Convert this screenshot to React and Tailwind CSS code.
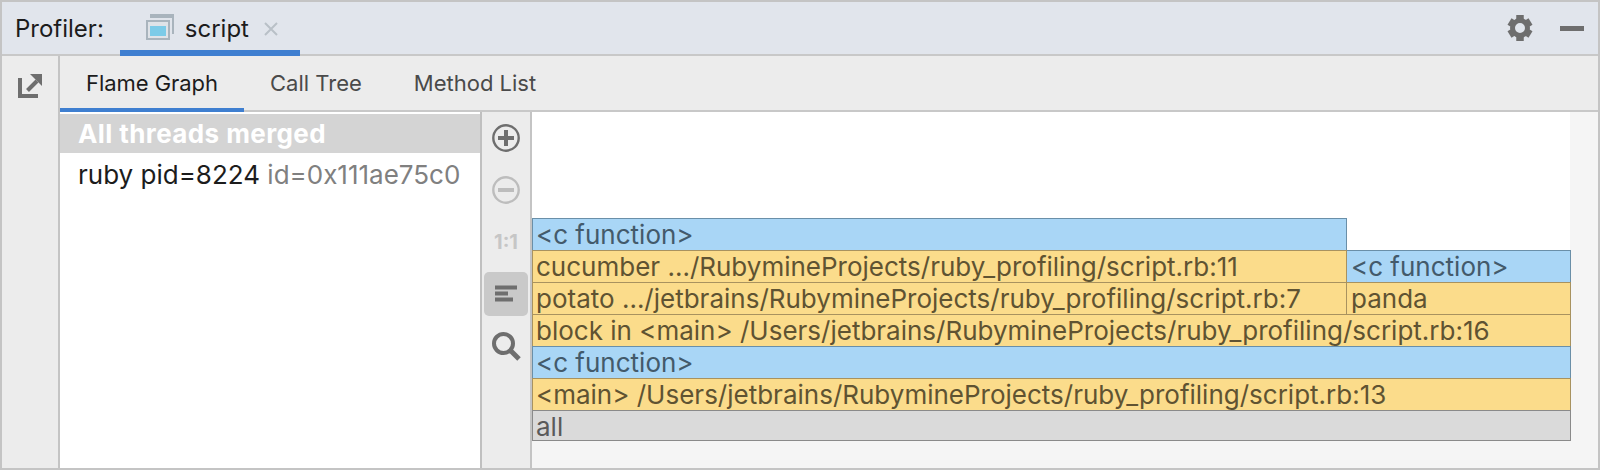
const FONT = "font-['Inter',sans-serif]";

// flame graph rows, top to bottom
const ROWS = [
  [
    { w: 815, kind: 'blue', label: '<c function>' },
  ],
  [
    { w: 815, kind: 'yellow', label: 'cucumber .../RubymineProjects/ruby_profiling/script.rb:11' },
    { w: 224, kind: 'blue', label: '<c function>' },
  ],
  [
    { w: 815, kind: 'yellow', label: 'potato .../jetbrains/RubymineProjects/ruby_profiling/script.rb:7' },
    { w: 224, kind: 'yellow', label: 'panda' },
  ],
  [{ w: 1039, kind: 'yellow', label: 'block in <main> /Users/jetbrains/RubymineProjects/ruby_profiling/script.rb:16' }],
  [{ w: 1039, kind: 'blue', label: '<c function>' }],
  [{ w: 1039, kind: 'yellow', label: '<main> /Users/jetbrains/RubymineProjects/ruby_profiling/script.rb:13' }],
  [{ w: 1039, kind: 'gray', label: 'all' }],
];

const CELL = {
  blue: 'bg-[#a9d6f6] border-[#6a8fa8] text-[#435a6b]',
  yellow: 'bg-[#fbdc8b] border-[#a8925f] text-[#5f5332]',
  gray: 'bg-[#dadada] border-[#8a8a8a] text-[#5a5a5a]',
};

function GraphRow({ cells, last }) {
  return (
    <div className={`flex ${last ? 'h-[31px]' : 'h-[32px]'}`}>
      {cells.map((c, i) => (
        <div
          key={i}
          style={{ width: c.w }}
          className={`${last ? 'h-[31px]' : 'h-[33px]'} shrink-0 border-[1px] pl-[3px] text-[26px] leading-[32px] whitespace-nowrap overflow-hidden ${CELL[c.kind]} ${i > 0 ? 'border-l-0 pl-[4px]' : ''}`}
        >
          {c.label}
        </div>
      ))}
    </div>
  );
}

function TabIcon() {
  return (
    <svg width="40" height="40" viewBox="0 0 40 40">
      <path d="M10 6H34V26H32V10H10Z" fill="#a9b4bd" />
      <rect x="6" y="12" width="24" height="20" fill="#a9b4bd" />
      <rect x="8" y="14" width="20" height="16" fill="#dfe3e8" />
      <rect x="10" y="18" width="16" height="10" fill="#7ccbe8" />
    </svg>
  );
}

function ExportIcon() {
  return (
    <svg width="40" height="40" viewBox="0 0 40 40">
      <path d="M8 12H12V28H28V32H8Z" fill="#6e6e6e" />
      <path d="M17.5 24.5L27 15" fill="none" stroke="#6e6e6e" strokeWidth="4" />
      <path d="M20 8H32V20Z" fill="#6e6e6e" />
    </svg>
  );
}

function GearIcon() {
  return (
    <svg width="26" height="28" viewBox="0 0 26 28">
      <circle cx="13" cy="14" r="7.5" fill="none" stroke="#6e6e6e" strokeWidth="5" />
      <g stroke="#6e6e6e" strokeWidth="7.5">
        <line x1="13" y1="1" x2="13" y2="6" />
        <line x1="13" y1="22" x2="13" y2="27" />
        <line x1="2.5" y1="7.5" x2="6.5" y2="10" />
        <line x1="19.5" y1="18" x2="23.5" y2="20.5" />
        <line x1="2.5" y1="20.5" x2="6.5" y2="18" />
        <line x1="19.5" y1="10" x2="23.5" y2="7.5" />
      </g>
    </svg>
  );
}

function CircleIcon({ color, plus }) {
  return (
    <svg width="30" height="30" viewBox="0 0 30 30">
      <circle cx="15" cy="15" r="12.7" fill="none" stroke={color} strokeWidth="2.4" />
      <path d="M7 15H23" stroke={color} strokeWidth="4" />
      {plus && <path d="M15 7V23" stroke={color} strokeWidth="4" />}
    </svg>
  );
}

function ToolBtn({ active, children }) {
  return (
    <div className={`w-[44px] h-[44px] flex items-center justify-center rounded-[5px] ${active ? 'bg-[#c9c9c9]' : ''}`}>
      {children}
    </div>
  );
}

export default function App() {
  return (
    <div className={`w-[1600px] h-[470px] flex flex-col bg-[#ececec] border-2 border-[#c4c4c4] ${FONT}`}>
      {/* Tool window header */}
      <div className="h-[54px] shrink-0 flex items-center bg-[#e1e5ec] border-b-2 border-[#c8c8c8]">
        <span className="ml-[13px] mt-[2px] text-[24px] text-[#1c1c1c]">Profiler:</span>
        <div className="relative ml-[16px] w-[180px] h-[52px] flex items-center">
          <div className="ml-[20px] flex items-center">
            <TabIcon />
            <span className="ml-[5px] mt-[2px] text-[24px] text-[#1c1c1c]">script</span>
            <svg className="ml-[15px] mt-[2px]" width="14" height="14" viewBox="0 0 14 14">
              <path d="M1 1L13 13M13 1L1 13" stroke="#b9c0c7" strokeWidth="2" />
            </svg>
          </div>
          <div className="absolute left-0 right-0 bottom-[-2px] h-[6px] bg-[#3f7fd0]" />
        </div>
        <div className="ml-auto mr-[14px] flex items-center gap-[27px]">
          <GearIcon />
          <div className="w-[24px] h-[5px] bg-[#6e6e6e]" />
        </div>
      </div>

      <div className="flex-1 flex min-h-0">
        {/* Left strip */}
        <div className="w-[58px] shrink-0 border-r-2 border-[#c4c4c4] pt-[10px] pl-[8px]">
          <ExportIcon />
        </div>

        <div className="flex-1 flex flex-col min-w-0">
          {/* Tabs */}
          <div className="h-[56px] shrink-0 flex bg-[#ececec] border-b-2 border-[#c8c8c8] text-[22px] leading-[54px]">
            <div className="relative w-[184px] pl-[26px] tracking-[-0.05px] text-[#1c1c1c]">
              Flame Graph
              <div className="absolute left-0 right-0 bottom-[-2px] h-[4px] bg-[#3f7fd0]" />
            </div>
            <div className="ml-[26px] text-[#4a4a4a]">Call Tree</div>
            <div className="ml-[52px] text-[#4a4a4a]">Method List</div>
          </div>

          <div className="flex-1 flex min-h-0">
            {/* Thread list */}
            <div className="w-[422px] shrink-0 bg-white pt-[2px] border-r-2 border-[#c0c0c0]">
              <div className="h-[39px] pl-[18px] bg-[#d4d4d4] text-white font-bold text-[26px] tracking-[0.4px] leading-[40px] whitespace-nowrap">
                All threads merged
              </div>
              <div className="pl-[18px] text-[26px] leading-[44px] whitespace-nowrap text-[#1c1c1c]">
                ruby pid=8224 <span className="text-[#808080]">id=0x111ae75c0</span>
              </div>
            </div>

            {/* Toolbar */}
            <div className="w-[50px] shrink-0 flex flex-col items-center gap-[8px] pt-[4px] border-r-2 border-[#c4c4c4]">
              <ToolBtn><CircleIcon color="#6e6e6e" plus /></ToolBtn>
              <ToolBtn><CircleIcon color="#bdbdbd" /></ToolBtn>
              <ToolBtn><span className="text-[20px] font-bold text-[#c6c6c6]">1:1</span></ToolBtn>
              <ToolBtn active>
                <svg width="24" height="18" viewBox="0 0 24 18">
                  <path d="M1 2.5H23M1 8.5H14M1 14.5H19" stroke="#6e6e6e" strokeWidth="4" />
                </svg>
              </ToolBtn>
              <ToolBtn>
                <svg width="30" height="30" viewBox="0 0 30 30">
                  <circle cx="12.5" cy="12.5" r="9.5" fill="none" stroke="#6e6e6e" strokeWidth="4" />
                  <path d="M19 19L28 28" stroke="#6e6e6e" strokeWidth="5" />
                </svg>
              </ToolBtn>
            </div>

            {/* Flame graph */}
            <div className="flex-1 flex flex-col bg-[#f5f5f5] min-w-0">
              <div className="w-[1038px] h-[329px] flex flex-col justify-end bg-white">
                {ROWS.map((cells, i) => (
                  <GraphRow key={i} cells={cells} last={i === ROWS.length - 1} />
                ))}
              </div>
            </div>
          </div>
        </div>
      </div>
    </div>
  );
}
